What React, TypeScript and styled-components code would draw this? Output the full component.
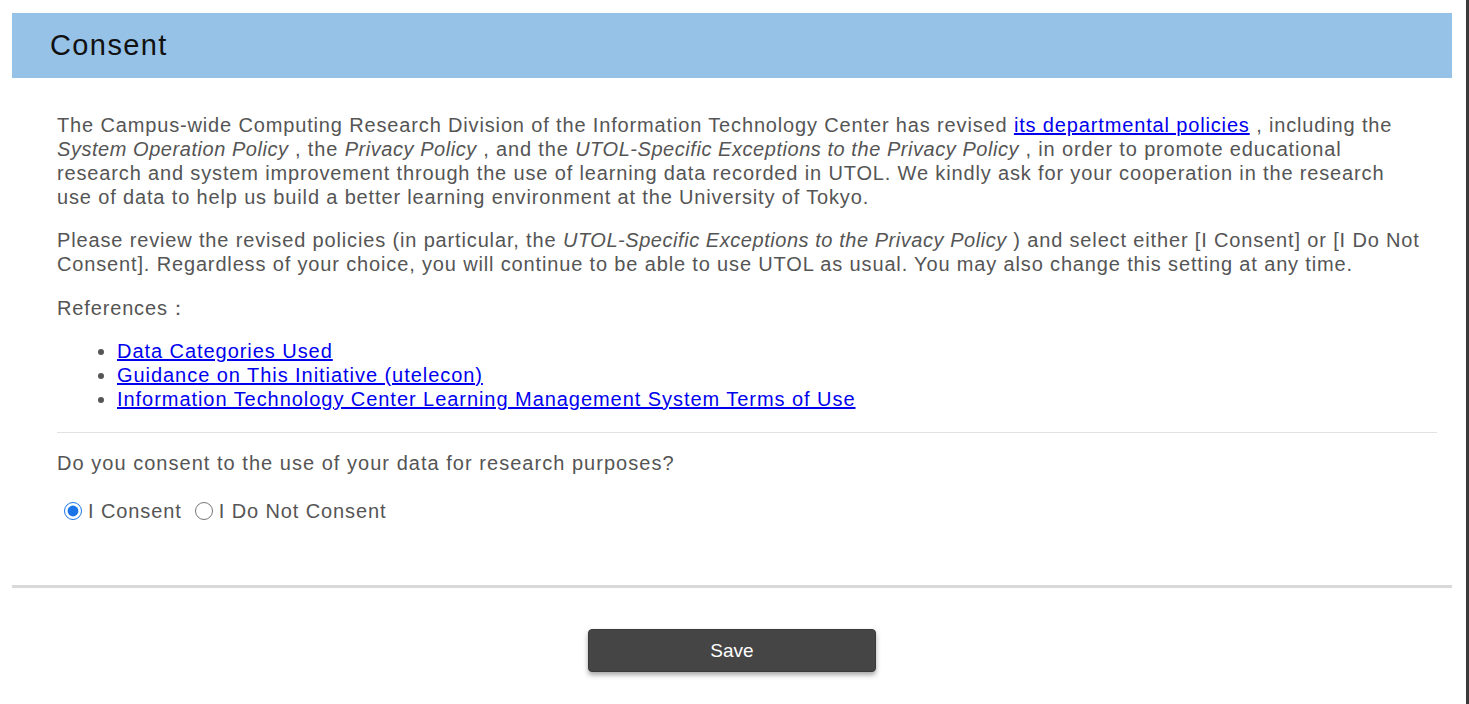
import React, { useState } from 'react';
import styled, { createGlobalStyle } from 'styled-components';

const GlobalStyle = createGlobalStyle`
  html, body {
    margin: 0;
    padding: 0;
    background: #fff;
  }
  body {
    font-family: "Liberation Sans", Arial, sans-serif;
  }
`;

const Window = styled.div`
  display: flex;
  height: 704px;
  overflow: hidden;
`;

const Page = styled.div`
  flex: 1;
  padding: 13px 14px 0 12px;
`;

const Edge = styled.div`
  width: 3px;
  background: #3a3a3a;
`;

const Header = styled.div`
  height: 65px;
  background: #96c2e8;
  display: flex;
  align-items: center;
  padding-left: 38px;

  h1 {
    margin: 0;
    font-size: 29px;
    font-weight: 400;
    letter-spacing: 1.4px;
    color: #111;
  }
`;

const Body = styled.div`
  padding: 35px 15px 0 45px;
  color: #555;
  font-size: 20px;
  letter-spacing: 0.85px;
  line-height: 24px;

  p {
    margin: 0 0 19px;
    max-width: 1365px;
  }

  em {
    letter-spacing: 0.55px;
  }

  a {
    color: #0000ee;
  }
`;

const Label = styled.p`
  && {
    margin-top: 20px;
  }
`;

const LinkList = styled.ul`
  margin: 19px 0 21px;
  padding-left: 60px;
  letter-spacing: 0.95px;

  li::marker {
    color: #555;
  }
`;

const Rule = styled.hr`
  border: none;
  border-top: 1px solid #e2e2e2;
  margin: 0 0 18px;
`;

const Question = styled.p`
  && {
    margin: 0 0 24px;
    letter-spacing: 1.03px;
  }
`;

const RadioRow = styled.div`
  display: flex;
  align-items: center;
  gap: 12px;
  padding-left: 6px;
  letter-spacing: 0.9px;
`;

const Choice = styled.label`
  display: flex;
  align-items: center;
  cursor: pointer;

  input {
    margin: 0 6px 0 1px;
    width: 18px;
    height: 18px;
    accent-color: #1a73e8;
  }
`;

const Divider = styled.div`
  height: 3px;
  background: #d9d9d9;
  margin-top: 62px;
`;

const Actions = styled.div`
  display: flex;
  justify-content: center;
  padding-top: 41px;
`;

const SaveButton = styled.button`
  width: 288px;
  height: 43px;
  background: #454545;
  color: #fff;
  border: 1px solid #3a3a3a;
  border-radius: 4px;
  font-family: "Liberation Sans", Arial, sans-serif;
  font-size: 19px;
  box-shadow: 0 3px 5px rgba(0, 0, 0, 0.35);
  cursor: pointer;
`;

const links = [
  'Data Categories Used',
  'Guidance on This Initiative (utelecon)',
  'Information Technology Center Learning Management System Terms of Use',
];

const App = (): JSX.Element => {
  const [choice, setChoice] = useState('yes');

  return (
    <Window>
      <GlobalStyle />
      <Page>
        <Header>
          <h1>Consent</h1>
        </Header>
        <Body>
          <p>
            The Campus-wide Computing Research Division of the Information Technology Center has revised{' '}
            <a href="#">its departmental policies</a> , including the <em>System Operation Policy</em> , the{' '}
            <em>Privacy Policy</em> , and the <em>UTOL-Specific Exceptions to the Privacy Policy</em> , in order to
            promote educational research and system improvement through the use of learning data recorded in UTOL.
            We kindly ask for your cooperation in the research use of data to help us build a better learning
            environment at the University of Tokyo.
          </p>
          <p>
            Please review the revised policies (in particular, the{' '}
            <em>UTOL-Specific Exceptions to the Privacy Policy</em> ) and select either [I Consent] or [I Do Not
            Consent]. Regardless of your choice, you will continue to be able to use UTOL as usual. You may also
            change this setting at any time.
          </p>
          <Label>References：</Label>
          <LinkList>
            {links.map((l) => (
              <li key={l}>
                <a href="#">{l}</a>
              </li>
            ))}
          </LinkList>
          <Rule />
          <Question>Do you consent to the use of your data for research purposes?</Question>
          <RadioRow>
            <Choice>
              <input type="radio" name="consent" checked={choice === 'yes'} onChange={() => setChoice('yes')} />
              I Consent
            </Choice>
            <Choice>
              <input type="radio" name="consent" checked={choice === 'no'} onChange={() => setChoice('no')} />
              I Do Not Consent
            </Choice>
          </RadioRow>
        </Body>
        <Divider />
        <Actions>
          <SaveButton>Save</SaveButton>
        </Actions>
      </Page>
      <Edge />
    </Window>
  );
};

export default App;
